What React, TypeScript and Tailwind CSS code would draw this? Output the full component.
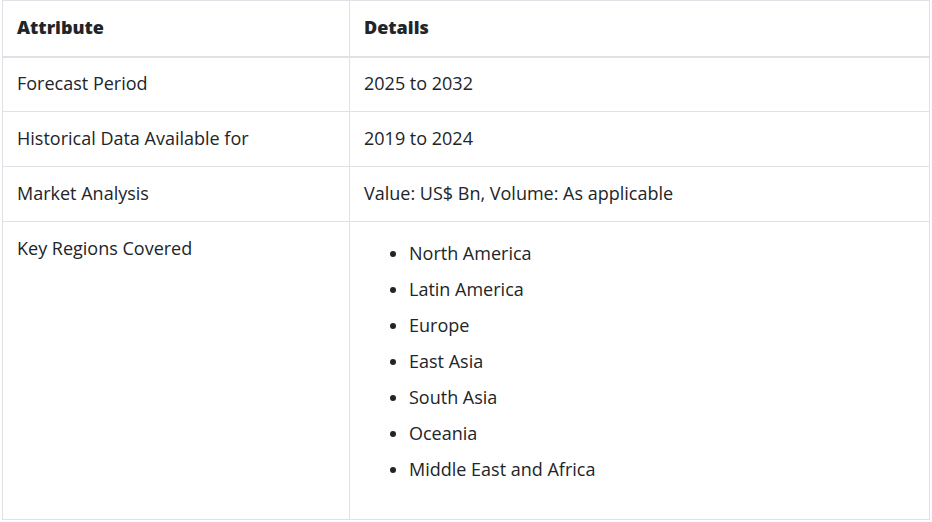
const rows: { attr: string; details: string | string[] }[] = [
  { attr: 'Forecast Period', details: '2025 to 2032' },
  { attr: 'Historical Data Available for', details: '2019 to 2024' },
  { attr: 'Market Analysis', details: 'Value: US$ Bn, Volume: As applicable' },
  {
    attr: 'Key Regions Covered',
    details: [
      'North America',
      'Latin America',
      'Europe',
      'East Asia',
      'South Asia',
      'Oceania',
      'Middle East and Africa',
    ],
  },
];

export default function App() {
  return (
    <div className="w-[932px] h-[522px] bg-white pl-[2px] pt-0 font-['Open_Sans',sans-serif] text-[#212529]">
      <table className="w-[928px] border-collapse text-[18px] leading-6">
        <thead>
          <tr>
            <th className="w-[347px] h-[56px] border border-b-2 border-[#e0e0e6] px-[14px] pb-[2px] text-left font-extrabold">
              Attribute
            </th>
            <th className="h-[56px] border border-b-2 border-[#e0e0e6] px-[14px] pb-[2px] text-left font-extrabold">
              Details
            </th>
          </tr>
        </thead>
        <tbody>
          {rows.map((row) => (
            <tr key={row.attr}>
              <td
                className={`border border-[#e0e0e6] px-[14px] ${
                  Array.isArray(row.details) ? 'align-top pt-[14px] pb-4' : 'h-[55px] pb-[2px]'
                }`}
              >
                {row.attr}
              </td>
              <td
                className={`border border-[#e0e0e6] px-[14px] ${
                  Array.isArray(row.details) ? 'align-top pt-[14px] pb-4' : 'h-[55px] pb-[2px]'
                }`}
              >
                {Array.isArray(row.details) ? (
                  <ul className="list-disc pl-[45px] -mt-px mb-[16px]">
                    {row.details.map((d) => (
                      <li key={d} className="py-1.5">
                        {d}
                      </li>
                    ))}
                  </ul>
                ) : (
                  row.details
                )}
              </td>
            </tr>
          ))}
        </tbody>
      </table>
    </div>
  );
}
